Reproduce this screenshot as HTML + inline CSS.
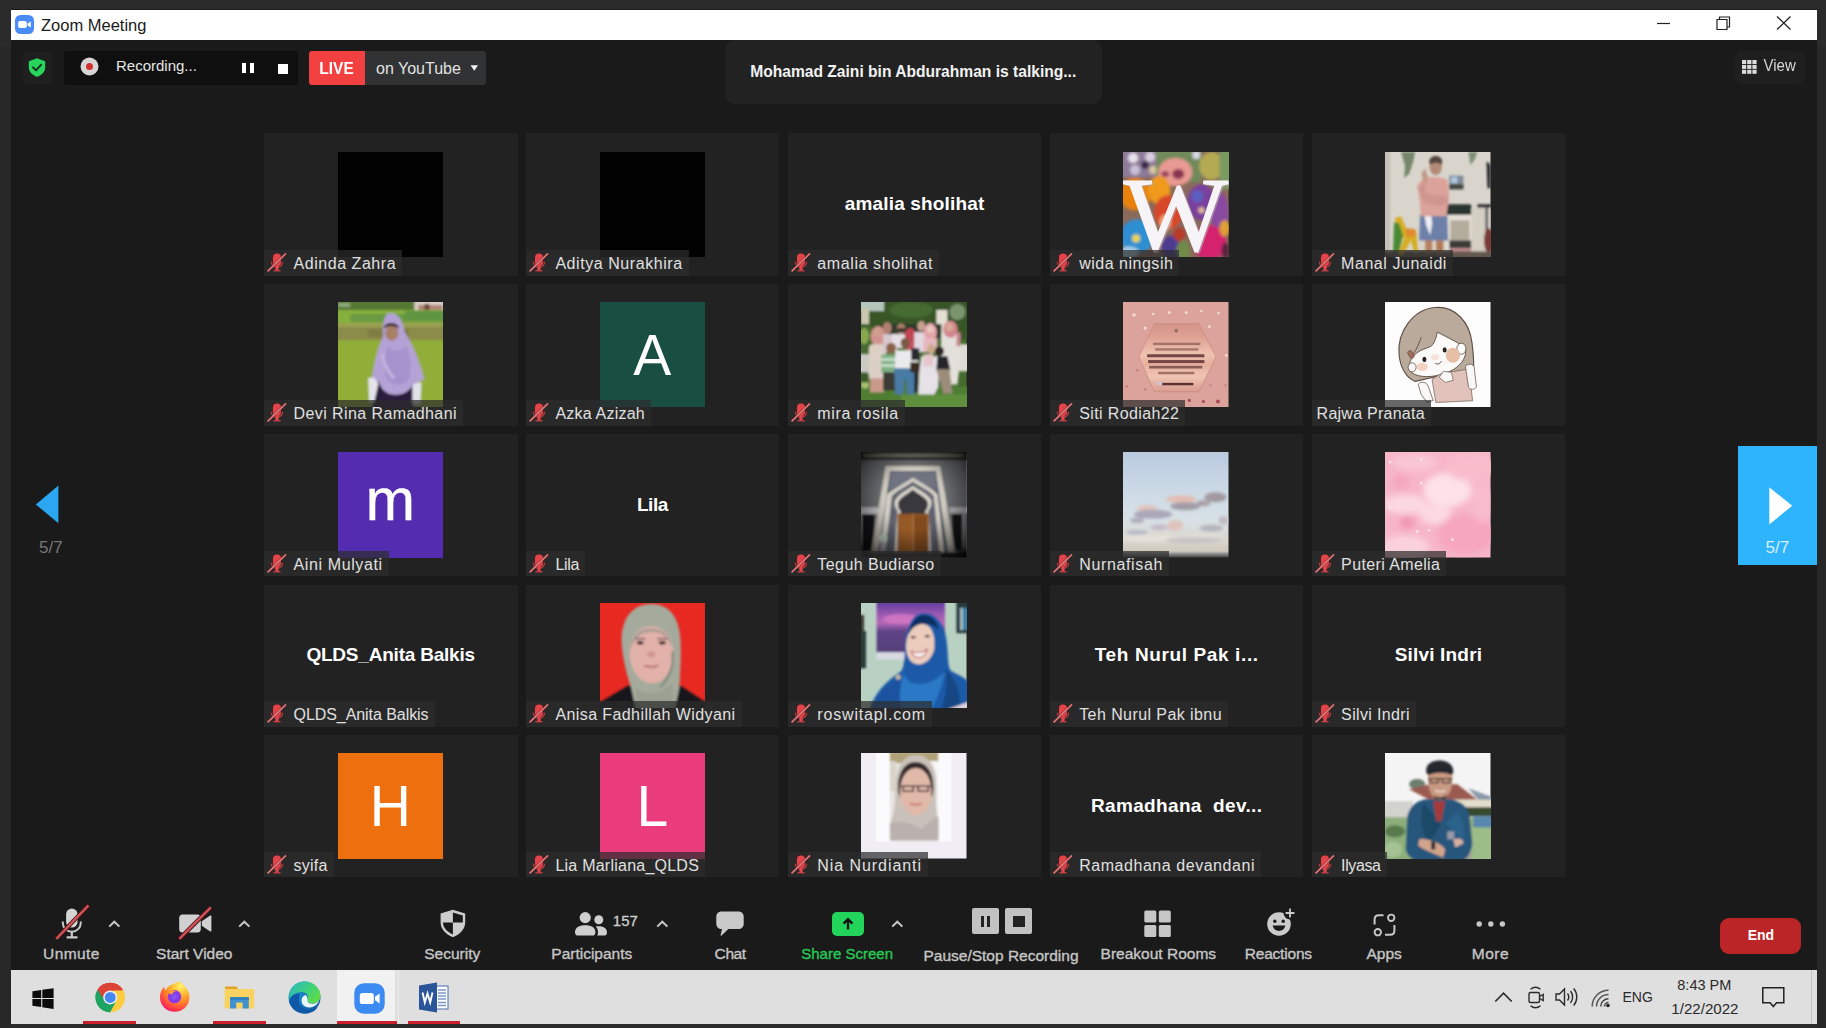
<!DOCTYPE html>
<html>
<head>
<meta charset="utf-8">
<title>Zoom Meeting</title>
<style>
*{box-sizing:border-box;margin:0;padding:0}
html,body{width:1826px;height:1028px;overflow:hidden;background:#2b2b2b;font-family:"Liberation Sans",sans-serif;}
.abs{position:absolute}
#win{position:absolute;left:11px;top:10px;width:1806px;height:1013.800px;background:#1a1a1a;overflow:hidden}
#titlebar{position:absolute;left:0;top:0;width:1806px;height:30px;background:#fff}
#titlebar .t{position:absolute;left:30px;top:4.5px;font-size:16.5px;line-height:20px;color:#1c1c1c;white-space:nowrap}
.tile{position:absolute;width:253.5px;height:142.4px;background:#222222}
.av{position:absolute;left:73.700px;top:18.300px;width:105.5px;height:105.5px;overflow:hidden}
.av svg{display:block}
.lbl{position:absolute;left:0;bottom:0;height:25.6px;background:rgba(45,45,45,0.72);color:#e0e0e0;font-size:16px;line-height:27px;padding-left:29.5px;padding-right:6px;white-space:nowrap}
.lbl.nomic{padding-left:5px}
.lbl svg{position:absolute;left:3px;top:3px}
.big{position:absolute;left:0;top:0;width:100%;height:100%;display:flex;align-items:center;justify-content:center;color:#fff;font-weight:bold;font-size:19px;white-space:nowrap;padding-bottom:1px}
.ltr{position:absolute;left:0;top:0;width:100%;height:100%;display:flex;align-items:center;justify-content:center;color:#fff;font-size:57px}
.ltrm{padding-bottom:9.500px;font-size:59px !important;-webkit-text-stroke:0.500px #fff}
.tbl{position:absolute;color:#c6c6c6;font-size:15.5px;white-space:nowrap;line-height:18px;margin-top:0.600px;-webkit-text-stroke:0.35px #c6c6c6;transform:translateX(-50%)}
#taskbar{position:absolute;left:0;top:960.400px;width:1806px;height:53.400px;background:#dfdfdf}
.ul{position:absolute;top:50.300px;height:3.100px;background:#cc1f2d}
.tray{position:absolute;color:#2a2a2a;font-size:14.5px;white-space:nowrap;line-height:16px}
</style>
</head>
<body>
<div class="abs" style="left:1817px;top:47px;width:9px;height:981px;background:#272727"></div>
<div class="abs" style="left:0;top:47px;width:11px;height:981px;background:#282828"></div>
<div class="abs" style="left:11px;top:9px;width:1806px;height:1px;background:#1b1b1b"></div>
<div id="win">
  <div id="titlebar">
    <svg class="abs" style="left:4px;top:5px" width="19" height="19" viewBox="0 0 19 19"><rect x="0" y="0" width="19" height="19" rx="5.5" fill="#4a8cf7"/><rect x="3.2" y="6" width="8.6" height="7" rx="1.8" fill="#fff"/><path d="M12.6 8.6 L15.8 6.4 V12.6 L12.6 10.4Z" fill="#fff"/></svg>
    <div class="t">Zoom Meeting</div>
    <svg class="abs" style="left:1640px;top:0" width="150" height="30" viewBox="0 0 150 30"><path d="M6 13.5H19" stroke="#222" stroke-width="1.2" fill="none"/><path d="M66 9.5H76V19.5H66Z M68.5 9.5V7H78.5V17H76" stroke="#222" stroke-width="1.2" fill="none"/><path d="M126 6.5L139.5 19.5M139.5 6.5L126 19.5" stroke="#222" stroke-width="1.3" fill="none"/></svg>
  </div>
  <!-- top bar -->
  <div class="abs" style="left:12px;top:42px;width:29px;height:32px;background:#1f1f1f;border-radius:4px"></div>
  <svg class="abs" style="left:17px;top:47.5px" width="18" height="19" viewBox="0 0 18 19"><path d="M9 0.3 L17.2 3.2 V9.2 C17.2 13.8 13.6 17.2 9 18.8 C4.4 17.2 0.8 13.8 0.8 9.2 V3.2 Z" fill="#27d45c"/><path d="M5 9.4 L8 12.3 L13 6.8" stroke="#17301f" stroke-width="2" fill="none" stroke-linecap="round" stroke-linejoin="round"/></svg>
  <div class="abs" style="left:53px;top:41px;width:233.5px;height:33.5px;background:#0f0f0f;border-radius:3px"></div>
  <svg class="abs" style="left:69px;top:47px" width="19" height="19" viewBox="0 0 19 19"><circle cx="9.5" cy="9.5" r="9" fill="#d6d6d6"/><circle cx="9.5" cy="9.400" r="3.500" fill="#d62f2f"/></svg>
  <div class="abs" style="left:105px;top:47px;font-size:15px;line-height:18px;color:#e6e6e6;white-space:nowrap">Recording...</div>
  <div class="abs" style="left:230.5px;top:53px;width:4px;height:10px;background:#fff"></div>
  <div class="abs" style="left:238.5px;top:53px;width:4px;height:10px;background:#fff"></div>
  <div class="abs" style="left:266.5px;top:53.5px;width:10.5px;height:10px;background:#fff"></div>
  <div class="abs" style="left:297.5px;top:41px;width:56px;height:33.5px;background:#f23f3f;border-radius:3px 0 0 3px"></div>
  <div class="abs" style="left:297.5px;top:41px;width:56px;height:33.5px;line-height:34px;text-align:center;color:#fff;font-weight:bold;font-size:15.5px;transform:scaleY(1.100)">LIVE</div>
  <div class="abs" style="left:353.5px;top:41px;width:121.5px;height:33.5px;background:#303234;border-radius:0 3px 3px 0"></div>
  <div class="abs" style="left:365px;top:41px;height:33.5px;line-height:35px;color:#e2e2e2;font-size:16px;white-space:nowrap">on YouTube</div>
  <svg class="abs" style="left:458.5px;top:55px" width="9" height="6" viewBox="0 0 9 6"><path d="M0.5 0.3H8.1L4.3 5.7Z" fill="#eee"/></svg>
  <div class="abs" style="left:714px;top:30px;width:376.5px;height:64px;background:#222222;border-radius:11px"></div>
  <div class="abs" style="left:714px;top:30px;width:376.5px;height:64px;line-height:64px;text-align:center;color:#f2f2f2;font-weight:bold;font-size:15.6px;white-space:nowrap" id="talk">Mohamad Zaini bin Abdurahman is talking...</div>
  <div class="abs" style="left:1724px;top:41px;width:70px;height:33px;background:#1f1f1f;border-radius:8px"></div>
  <svg class="abs" style="left:1731px;top:50px" width="15" height="14" viewBox="0 0 15 14"><g fill="#dcdcdc"><rect x="0" y="0" width="4.2" height="4" /><rect x="5.2" y="0" width="4.2" height="4"/><rect x="10.4" y="0" width="4.2" height="4"/><rect x="0" y="4.9" width="4.2" height="4"/><rect x="5.2" y="4.9" width="4.2" height="4"/><rect x="10.4" y="4.9" width="4.2" height="4"/><rect x="0" y="9.8" width="4.2" height="4"/><rect x="5.2" y="9.8" width="4.2" height="4"/><rect x="10.4" y="9.8" width="4.2" height="4"/></g></svg>
  <div class="abs" style="left:1752.5px;top:47px;font-size:15px;line-height:18px;color:#d4d4d4;white-space:nowrap;transform:scaleY(1.080)">View</div>
  <!-- grid -->
  <div class="tile" style="left:253.0px;top:123.3px"><div class="av"><svg width="105.5" height="105.5" viewBox="0 0 105 105" preserveAspectRatio="none"><rect width="105" height="105" fill="#020202"/></svg></div><div class="lbl"><svg width="20" height="19" viewBox="0 0 20 19"><rect x="5.200" y="-0.400" width="9.600" height="14" rx="4.800" fill="#5a1a1c" opacity="0.550"/><g fill="#e3444a"><rect x="6" y="0.400" width="8" height="12.600" rx="4"/><path d="M3.800 8.800h1.300c0 2.800 2.100 4.800 4.900 4.800s4.900-2 4.900-4.800h1.300c0 3.300-2.300 5.700-5.300 6.100V17h2.700v1.500H6.400V17h2.700v-2.100C6.100 14.500 3.800 12.100 3.800 8.800z" opacity="0.750"/><rect x="8.400" y="12" width="3.200" height="5.500"/></g><path d="M0.600 18.400L19 0.400" stroke="#5a1a1c" stroke-width="3" opacity="0.450"/><path d="M0.600 18.400L19 0.400" stroke="#e07a7c" stroke-width="1.600"/></svg><span style="letter-spacing:0.545px">Adinda Zahra</span></div></div>
  <div class="tile" style="left:514.9px;top:123.3px"><div class="av"><svg width="105.5" height="105.5" viewBox="0 0 105 105" preserveAspectRatio="none"><rect width="105" height="105" fill="#020202"/></svg></div><div class="lbl"><svg width="20" height="19" viewBox="0 0 20 19"><rect x="5.200" y="-0.400" width="9.600" height="14" rx="4.800" fill="#5a1a1c" opacity="0.550"/><g fill="#e3444a"><rect x="6" y="0.400" width="8" height="12.600" rx="4"/><path d="M3.800 8.800h1.300c0 2.800 2.100 4.800 4.900 4.800s4.900-2 4.900-4.800h1.300c0 3.300-2.300 5.700-5.300 6.100V17h2.700v1.500H6.400V17h2.700v-2.100C6.100 14.500 3.800 12.100 3.800 8.800z" opacity="0.750"/><rect x="8.400" y="12" width="3.200" height="5.500"/></g><path d="M0.600 18.400L19 0.400" stroke="#5a1a1c" stroke-width="3" opacity="0.450"/><path d="M0.600 18.400L19 0.400" stroke="#e07a7c" stroke-width="1.600"/></svg><span style="letter-spacing:0.560px">Aditya Nurakhira</span></div></div>
  <div class="tile" style="left:776.8px;top:123.3px"><div class="big"><span style="letter-spacing:0.157px;margin-right:-0.157px">amalia sholihat</span></div><div class="lbl"><svg width="20" height="19" viewBox="0 0 20 19"><rect x="5.200" y="-0.400" width="9.600" height="14" rx="4.800" fill="#5a1a1c" opacity="0.550"/><g fill="#e3444a"><rect x="6" y="0.400" width="8" height="12.600" rx="4"/><path d="M3.800 8.800h1.300c0 2.800 2.100 4.800 4.900 4.800s4.900-2 4.900-4.800h1.300c0 3.300-2.300 5.700-5.300 6.100V17h2.700v1.500H6.400V17h2.700v-2.100C6.100 14.500 3.800 12.100 3.800 8.800z" opacity="0.750"/><rect x="8.400" y="12" width="3.200" height="5.500"/></g><path d="M0.600 18.400L19 0.400" stroke="#5a1a1c" stroke-width="3" opacity="0.450"/><path d="M0.600 18.400L19 0.400" stroke="#e07a7c" stroke-width="1.600"/></svg><span style="letter-spacing:0.600px">amalia sholihat</span></div></div>
  <div class="tile" style="left:1038.7px;top:123.3px"><div class="av"><svg width="105.5" height="105.5" viewBox="0 0 105 105" preserveAspectRatio="none"><filter id="bw" x="-5%" y="-5%" width="110%" height="110%"><feGaussianBlur stdDeviation="1.600"/></filter><rect width="105" height="105" fill="#8a6a5a"/><g filter="url(#bw)"><rect x="-5" y="-5" width="45" height="30" fill="#8d7a98"/><circle cx="10" cy="6" r="5" fill="#e8e4ee"/><circle cx="27" cy="5" r="5" fill="#d8d0e0"/><circle cx="12" cy="18" r="5" fill="#c8c0d8"/><circle cx="22" cy="13" r="4" fill="#3a2a4a"/><circle cx="30" cy="18" r="4" fill="#d8c8a0"/><rect x="33" y="-5" width="45" height="35" fill="#6f8a5a"/><ellipse cx="52" cy="20" rx="17" ry="14" fill="#e89a92"/><ellipse cx="55" cy="22" rx="6" ry="5" fill="#8a3050"/><ellipse cx="42" cy="22" rx="4" ry="3" fill="#9a4060"/><ellipse cx="88" cy="14" rx="12" ry="14" fill="#b4aa52"/><rect x="96" y="-3" width="12" height="40" fill="#7a9a62"/><circle cx="73" cy="3" r="4" fill="#d8d8e8"/><ellipse cx="12" cy="42" rx="16" ry="16" fill="#e8820f"/><ellipse cx="36" cy="38" rx="11" ry="14" fill="#f09a1a"/><ellipse cx="45" cy="60" rx="14" ry="17" fill="#d8462a"/><ellipse cx="42" cy="70" rx="6" ry="8" fill="#f0a070"/><ellipse cx="78" cy="50" rx="14" ry="18" fill="#7a3f9e"/><ellipse cx="74" cy="44" rx="6" ry="6" fill="#5a60c0"/><ellipse cx="96" cy="60" rx="9" ry="20" fill="#8a4aa0"/><circle cx="78" cy="58" r="3" fill="#e8c090"/><ellipse cx="14" cy="84" rx="17" ry="17" fill="#2f8ed2"/><circle cx="13" cy="86" r="4" fill="#e8d84a"/><ellipse cx="6" cy="100" rx="10" ry="6" fill="#a8d0e8"/><ellipse cx="48" cy="95" rx="10" ry="12" fill="#4e3a92"/><ellipse cx="60" cy="98" rx="7" ry="10" fill="#6f8a4a"/><ellipse cx="56" cy="82" rx="6" ry="7" fill="#b83a2a"/><ellipse cx="86" cy="90" rx="17" ry="17" fill="#d4246e"/><ellipse cx="101" cy="76" rx="5" ry="8" fill="#e0a030"/><ellipse cx="102" cy="98" rx="4" ry="8" fill="#5a2040"/></g><g transform="translate(52.500 0) scale(1.050 1) translate(-52.500 0)"><text x="52.500" y="97.500" text-anchor="middle" font-family="Liberation Serif,serif" font-size="105" fill="#b8a8b0" stroke="#b8a8b0" stroke-width="1.200" opacity="0.600" transform="translate(1.500,1.500)">W</text><text x="52.500" y="97.500" text-anchor="middle" font-family="Liberation Serif,serif" font-size="105" fill="#f6f4f6" stroke="#f6f4f6" stroke-width="1.200">W</text></g></svg></div><div class="lbl"><svg width="20" height="19" viewBox="0 0 20 19"><rect x="5.200" y="-0.400" width="9.600" height="14" rx="4.800" fill="#5a1a1c" opacity="0.550"/><g fill="#e3444a"><rect x="6" y="0.400" width="8" height="12.600" rx="4"/><path d="M3.800 8.800h1.300c0 2.800 2.100 4.800 4.900 4.800s4.900-2 4.900-4.800h1.300c0 3.300-2.300 5.700-5.300 6.100V17h2.700v1.500H6.400V17h2.700v-2.100C6.100 14.500 3.800 12.100 3.800 8.800z" opacity="0.750"/><rect x="8.400" y="12" width="3.200" height="5.500"/></g><path d="M0.600 18.400L19 0.400" stroke="#5a1a1c" stroke-width="3" opacity="0.450"/><path d="M0.600 18.400L19 0.400" stroke="#e07a7c" stroke-width="1.600"/></svg><span style="letter-spacing:0.509px">wida ningsih</span></div></div>
  <div class="tile" style="left:1300.6px;top:123.3px"><div class="av"><svg width="105.5" height="105.5" viewBox="0 0 105 105" preserveAspectRatio="none"><filter id="bm" x="-5%" y="-5%" width="110%" height="110%"><feGaussianBlur stdDeviation="0.900"/></filter><rect width="105" height="105" fill="#d9d5cd"/><g filter="url(#bm)"><rect x="-3" y="-3" width="8" height="111" fill="#c4c0b8"/><path d="M16 0h14l-2 10l-4 12l-5 4l1-12z" fill="#76866a"/><path d="M83 0h9l-3 8l-4 5z" fill="#7f8f74"/><rect x="64" y="23.500" width="14" height="14" fill="#7f8c98"/><rect x="64" y="32" width="14" height="5" fill="#4a4a40"/><rect x="66" y="25" width="6" height="6" fill="#b0c8e0"/><rect x="61" y="52" width="25" height="11" rx="2" fill="#2c3631"/><rect x="61" y="62.500" width="27" height="44" fill="#e4e0d8"/><rect x="65" y="68" width="19" height="20" fill="#b4ac9c"/><rect x="64" y="88" width="22" height="8" fill="#3c3a38"/><rect x="64" y="96" width="22" height="6" fill="#c08888"/><rect x="86" y="56" width="19" height="44" fill="#d4cfc2"/><rect x="92" y="52" width="14" height="3.500" fill="#33333a"/><rect x="100" y="55" width="2.500" height="30" fill="#55555a"/><path d="M101 10c3 0 4 3 4 6v20h-3z" fill="#26262a"/><ellipse cx="103" cy="88" rx="4.500" ry="12" fill="#7a3a34"/><rect x="-3" y="99" width="111" height="9" fill="#62584e"/><path d="M10 66l6-2l5 12l10 2l2 22h-4l-3-12l-8 14h-5l6-16l-7-4z" fill="#d6ae22"/><path d="M9 70l5 1l4 12l-4 16h-6z" fill="#4c8a34"/><path d="M20 76l10 1l1 6l-9 2z" fill="#e08a30"/><rect x="40" y="86" width="7" height="15" fill="#b98060"/><rect x="51" y="86" width="7" height="15" fill="#b47a58"/><path d="M35 62h27l1 26h-29z" fill="#6c80a8"/><path d="M39 62h7l1 9l-2 12l-4-10z" fill="#eeeef2"/><path d="M36 28c4-4 22-4 26 0l2 16l-3 20h-25l-2-20l-2-10z" fill="#dba29b"/><path d="M33 36l6-8l3 14l18 2l4 6l-10 4l-16-4z" fill="#cf9690"/><path d="M36 22l4-6l3 10l-3 6z" fill="#c39a86"/><ellipse cx="50.500" cy="15" rx="6.200" ry="8" fill="#b28a76"/><path d="M44 10c0-8 13-8 13 0l-1 3c-3-3-8-3-11 0z" fill="#54443c"/></g></svg></div><div class="lbl"><svg width="20" height="19" viewBox="0 0 20 19"><rect x="5.200" y="-0.400" width="9.600" height="14" rx="4.800" fill="#5a1a1c" opacity="0.550"/><g fill="#e3444a"><rect x="6" y="0.400" width="8" height="12.600" rx="4"/><path d="M3.800 8.800h1.300c0 2.800 2.100 4.800 4.900 4.800s4.900-2 4.900-4.800h1.300c0 3.300-2.300 5.700-5.300 6.100V17h2.700v1.500H6.400V17h2.700v-2.100C6.100 14.500 3.800 12.100 3.800 8.800z" opacity="0.750"/><rect x="8.400" y="12" width="3.200" height="5.500"/></g><path d="M0.600 18.400L19 0.400" stroke="#5a1a1c" stroke-width="3" opacity="0.450"/><path d="M0.600 18.400L19 0.400" stroke="#e07a7c" stroke-width="1.600"/></svg><span style="letter-spacing:0.550px">Manal Junaidi</span></div></div>
  <div class="tile" style="left:253.0px;top:273.7px"><div class="av"><svg width="105.5" height="105.5" viewBox="0 0 105 105" preserveAspectRatio="none"><filter id="bd" x="-5%" y="-5%" width="110%" height="110%"><feGaussianBlur stdDeviation="0.900"/></filter><rect width="105" height="105" fill="#90ae38"/><g filter="url(#bd)"><rect x="-3" y="-3" width="111" height="12" fill="#567836"/><rect x="0" y="1" width="12" height="4" fill="#88a878"/><rect x="76" y="-2" width="32" height="11" fill="#d9ccc6"/><rect x="80" y="3" width="24" height="6" fill="#b08674"/><rect x="86" y="2" width="5" height="6" fill="#6a4a3c"/><rect x="-3" y="8" width="111" height="14" fill="#86b03c"/><rect x="12" y="12" width="96" height="8" rx="3" fill="#6a9a42"/><rect x="66" y="9" width="42" height="9" rx="3" fill="#5f9440"/><rect x="-3" y="21" width="111" height="18" fill="#8b8c48"/><rect x="-3" y="21" width="111" height="4" fill="#9aa052"/><rect x="30" y="27" width="40" height="8" fill="#807c44"/><rect x="-3" y="38" width="111" height="70" fill="#90ae38"/><path d="M36 78h38l2 30h-42z" fill="#2a1c3c"/><path d="M30 76l8-2l2 8l-4 18h-5z" fill="#e4e4ea"/><path d="M74 80h9l-1 22h-8z" fill="#e2e2ea"/><path d="M52 11c8 0 13 8 14 18c6 10 14 24 20 48c-6 3-10 4-12 6c-4 8-14 10-20 9c-8-1-12-8-13-12c-3-2-5-4-7-6c2-14 6-30 11-40c-1-12 1-23 7-23z" fill="#b4a2d6"/><path d="M50 44c4 6 12 6 18 0c4 10 6 20 2 34c-6 6-16 6-22-2c-2-12-2-22 2-32z" fill="#a692cc"/><path d="M44 52c2 8 4 16 12 24" stroke="#c4b4e0" stroke-width="3" fill="none"/><ellipse cx="53.500" cy="31" rx="6.500" ry="7.500" fill="#a88068"/><path d="M46 27c2-4 12-4 14 0l0 -3c-3-4-11-4-14 0z" fill="#3a2a2a"/></g></svg></div><div class="lbl"><svg width="20" height="19" viewBox="0 0 20 19"><rect x="5.200" y="-0.400" width="9.600" height="14" rx="4.800" fill="#5a1a1c" opacity="0.550"/><g fill="#e3444a"><rect x="6" y="0.400" width="8" height="12.600" rx="4"/><path d="M3.800 8.800h1.300c0 2.800 2.100 4.800 4.900 4.800s4.900-2 4.900-4.800h1.300c0 3.300-2.300 5.700-5.300 6.100V17h2.700v1.500H6.400V17h2.700v-2.100C6.100 14.500 3.800 12.100 3.800 8.800z" opacity="0.750"/><rect x="8.400" y="12" width="3.200" height="5.500"/></g><path d="M0.600 18.400L19 0.400" stroke="#5a1a1c" stroke-width="3" opacity="0.450"/><path d="M0.600 18.400L19 0.400" stroke="#e07a7c" stroke-width="1.600"/></svg><span style="letter-spacing:0.411px">Devi Rina Ramadhani</span></div></div>
  <div class="tile" style="left:514.9px;top:273.7px"><div class="av" style="background:#184f42"><div class="ltr ltrA">A</div></div><div class="lbl"><svg width="20" height="19" viewBox="0 0 20 19"><rect x="5.200" y="-0.400" width="9.600" height="14" rx="4.800" fill="#5a1a1c" opacity="0.550"/><g fill="#e3444a"><rect x="6" y="0.400" width="8" height="12.600" rx="4"/><path d="M3.800 8.800h1.300c0 2.800 2.100 4.800 4.900 4.800s4.900-2 4.900-4.800h1.300c0 3.300-2.300 5.700-5.300 6.100V17h2.700v1.500H6.400V17h2.700v-2.100C6.100 14.500 3.800 12.100 3.800 8.800z" opacity="0.750"/><rect x="8.400" y="12" width="3.200" height="5.500"/></g><path d="M0.600 18.400L19 0.400" stroke="#5a1a1c" stroke-width="3" opacity="0.450"/><path d="M0.600 18.400L19 0.400" stroke="#e07a7c" stroke-width="1.600"/></svg><span style="letter-spacing:0.220px">Azka Azizah</span></div></div>
  <div class="tile" style="left:776.8px;top:273.7px"><div class="av"><svg width="105.5" height="105.5" viewBox="0 0 105 105" preserveAspectRatio="none"><filter id="br" x="-5%" y="-5%" width="110%" height="110%"><feGaussianBlur stdDeviation="1.100"/></filter><rect width="105" height="105" fill="#456a2e"/><g filter="url(#br)"><rect x="-3" y="-3" width="111" height="40" fill="#375428"/><rect x="-3" y="-3" width="26" height="12" fill="#b4c6bc"/><ellipse cx="50" cy="8" rx="22" ry="8" fill="#456a30"/><ellipse cx="96" cy="10" rx="8" ry="8" fill="#7a9470"/><rect x="0" y="6" width="8" height="16" fill="#c9c8ae"/><rect x="75" y="8" width="11" height="26" fill="#e4e0d4"/><rect x="-3" y="24" width="14" height="30" fill="#4a6a30"/><ellipse cx="3" cy="34" rx="5" ry="8" fill="#88a850"/><rect x="-3" y="52" width="12" height="20" fill="#cbcbc2"/><rect x="94" y="42" width="14" height="27" fill="#dcdcd4"/><rect x="-3" y="84" width="111" height="24" fill="#4f7e32"/><rect x="40" y="92" width="68" height="16" fill="#5f8f3e"/><ellipse cx="4" cy="82" rx="4" ry="4" fill="#a8c070"/><rect x="-3" y="70" width="10" height="10" fill="#3a5a2a"/><rect x="20" y="22" width="60" height="14" fill="#2f3a2a"/><ellipse cx="17" cy="34" rx="7.500" ry="10" fill="#d39490"/><rect x="8" y="42" width="17" height="37" rx="4" fill="#dcd0c4"/><rect x="9" y="76" width="14" height="14" fill="#c99a8a"/><ellipse cx="16" cy="30" rx="4" ry="4.500" fill="#d0a08c"/><ellipse cx="26" cy="26" rx="4.500" ry="6" fill="#b08070"/><rect x="22" y="32" width="14" height="18" fill="#d8c8d0"/><ellipse cx="40" cy="27" rx="4.500" ry="5.500" fill="#a88068"/><rect x="31" y="32" width="16" height="14" fill="#e4e0e6"/><rect x="36" y="26" width="9" height="4" fill="#3a3030"/><ellipse cx="49" cy="33" rx="5.500" ry="7" fill="#c24452"/><rect x="45" y="38" width="10" height="10" fill="#c65060"/><ellipse cx="60" cy="24" rx="4" ry="5" fill="#c8a090"/><rect x="53" y="30" width="13" height="20" fill="#e2d8e2"/><ellipse cx="69" cy="30" rx="6.500" ry="9" fill="#e4a4ac"/><rect x="62" y="36" width="14" height="14" fill="#e6b8be"/><ellipse cx="69" cy="27" rx="3.500" ry="3.500" fill="#e8c8bc"/><path d="M80 32h18l1 24l-3 26h-13l-4-30z" fill="#e3dfda"/><ellipse cx="89" cy="27" rx="7" ry="8.500" fill="#d2848c"/><ellipse cx="88" cy="25" rx="4" ry="4.500" fill="#d8a898"/><rect x="95" y="30" width="4" height="14" fill="#c88890"/><ellipse cx="30" cy="46" rx="5" ry="5.500" fill="#8a6448"/><rect x="20" y="52" width="15" height="19" rx="3" fill="#7fae84"/><rect x="20" y="56" width="15" height="2.500" fill="#cfe4d0"/><rect x="20" y="62" width="15" height="2.500" fill="#cfe4d0"/><rect x="22" y="70" width="14" height="18" fill="#3a3a34"/><ellipse cx="44" cy="41" rx="4.500" ry="5.500" fill="#7a5a44"/><path d="M34 48h22l2 20h-24z" fill="#ebebee"/><rect x="50" y="46" width="8" height="12" fill="#2a2a34"/><path d="M33 66h21l-1 26h-7l-2-18l-2 18h-8z" fill="#4a7ca4"/><rect x="49" y="60" width="10" height="10" fill="#3a2a24"/><rect x="53" y="68" width="4" height="22" fill="#26262c"/><ellipse cx="70" cy="47" rx="4" ry="5" fill="#c8a888"/><path d="M60 54h18l-1 30l-4 8h-16l1-22z" fill="#e6e2e8"/><rect x="62" y="52" width="10" height="12" fill="#e6c8cc"/><ellipse cx="78" cy="49" rx="4.500" ry="5" fill="#2f2620"/><path d="M76 54h10l3 14h-14z" fill="#26262a"/><path d="M75 67h13l3 24h-9z" fill="#9c8c7a"/></g></svg></div><div class="lbl"><svg width="20" height="19" viewBox="0 0 20 19"><rect x="5.200" y="-0.400" width="9.600" height="14" rx="4.800" fill="#5a1a1c" opacity="0.550"/><g fill="#e3444a"><rect x="6" y="0.400" width="8" height="12.600" rx="4"/><path d="M3.800 8.800h1.300c0 2.800 2.100 4.800 4.900 4.800s4.900-2 4.900-4.800h1.300c0 3.300-2.300 5.700-5.300 6.100V17h2.700v1.500H6.400V17h2.700v-2.100C6.100 14.500 3.800 12.100 3.800 8.800z" opacity="0.750"/><rect x="8.400" y="12" width="3.200" height="5.500"/></g><path d="M0.600 18.400L19 0.400" stroke="#5a1a1c" stroke-width="3" opacity="0.450"/><path d="M0.600 18.400L19 0.400" stroke="#e07a7c" stroke-width="1.600"/></svg><span style="letter-spacing:0.700px">mira rosila</span></div></div>
  <div class="tile" style="left:1038.7px;top:273.7px"><div class="av"><svg width="105.5" height="105.5" viewBox="0 0 105 105" preserveAspectRatio="none"><defs><linearGradient id="sg1" x1="0" y1="0" x2="0" y2="1"><stop offset="0" stop-color="#d4948a"/><stop offset="0.180" stop-color="#dda092"/><stop offset="0.450" stop-color="#efc2b0"/><stop offset="0.600" stop-color="#e7b09e"/><stop offset="0.780" stop-color="#f0c4b2"/><stop offset="1" stop-color="#d89c90"/></linearGradient><filter id="bs" x="-5%" y="-5%" width="110%" height="110%"><feGaussianBlur stdDeviation="0.700"/></filter></defs><rect width="105" height="105" fill="#dba39b"/><g filter="url(#bs)"><g fill="#f4d8d0"><circle cx="11" cy="13" r="1.800"/><circle cx="30" cy="12" r="1.300"/><circle cx="46" cy="10.500" r="1.500"/><circle cx="63" cy="10.500" r="1.600"/><circle cx="78" cy="9" r="1.300"/><circle cx="95" cy="11" r="1.300"/><circle cx="22" cy="26" r="1.600"/><circle cx="86" cy="24.500" r="1.500"/><circle cx="103" cy="53" r="1.500"/></g><g fill="#c98484"><circle cx="14" cy="68" r="1.300"/><circle cx="4" cy="84" r="1.300"/><circle cx="22" cy="87" r="1.300"/><circle cx="87" cy="83" r="1.200"/><circle cx="102" cy="83" r="1.200"/></g><g fill="#a8465a"><circle cx="66" cy="98" r="1.600"/><circle cx="80" cy="99" r="1.500"/><circle cx="94.500" cy="99" r="1.900"/></g><path d="M18 57L33 24L78 27L90 52L74 87L30 86Z" fill="none" stroke="#c48a80" stroke-width="0.800"/><path d="M15.800 54.600L31.200 21.400H75.500L92.600 54.600L75.500 89.400H31.200Z" fill="url(#sg1)" stroke="#c88a80" stroke-width="0.700"/><circle cx="53" cy="28.500" r="1.800" fill="#9a6a62"/><g fill="#6a4040"><rect x="30" y="40.500" width="47" height="2.400" opacity="0.550"/><rect x="32" y="46" width="43" height="2.400" opacity="0.550"/><rect x="24" y="52" width="57" height="3" fill="#5e3034" opacity="0.850"/><rect x="25" y="57.800" width="56" height="3" fill="#5e3034" opacity="0.850"/><rect x="26" y="63.500" width="53" height="2.700" opacity="0.750"/><rect x="35" y="69.500" width="36" height="2.400" opacity="0.600"/><rect x="39" y="80.500" width="31" height="2.400" fill="#4e2428" opacity="0.900"/></g><ellipse cx="36" cy="81" rx="3" ry="1.600" fill="#c8c8e0" opacity="0.800"/></g></svg></div><div class="lbl"><svg width="20" height="19" viewBox="0 0 20 19"><rect x="5.200" y="-0.400" width="9.600" height="14" rx="4.800" fill="#5a1a1c" opacity="0.550"/><g fill="#e3444a"><rect x="6" y="0.400" width="8" height="12.600" rx="4"/><path d="M3.800 8.800h1.300c0 2.800 2.100 4.800 4.900 4.800s4.900-2 4.900-4.800h1.300c0 3.300-2.300 5.700-5.300 6.100V17h2.700v1.500H6.400V17h2.700v-2.100C6.100 14.500 3.800 12.100 3.800 8.800z" opacity="0.750"/><rect x="8.400" y="12" width="3.200" height="5.500"/></g><path d="M0.600 18.400L19 0.400" stroke="#5a1a1c" stroke-width="3" opacity="0.450"/><path d="M0.600 18.400L19 0.400" stroke="#e07a7c" stroke-width="1.600"/></svg><span style="letter-spacing:0.383px">Siti Rodiah22</span></div></div>
  <div class="tile" style="left:1300.6px;top:273.7px"><div class="av"><svg width="105.5" height="105.5" viewBox="0 0 105 105" preserveAspectRatio="none"><rect width="105" height="105" fill="#fdfdfd"/><path d="M50 5.500C70 4 84 20 86.500 40C88 52 89 60 88 68C84 72 74 73 70 70L30 79C22 76 15 66 14 52C12 30 28 7 50 5.500Z" fill="#b9aa9b" stroke="#5c4c44" stroke-width="1.100"/><path d="M52 30C64 36 76 42 80 46C82 56 74 66 60 71C48 75 34 76 26 70C22 66 24 58 30 52C36 47 42 46 46 44C50 40 51 35 52 30Z" fill="#fbfaf8" stroke="#5c4c44" stroke-width="0.900"/><path d="M36 35C34 42 30 50 26 54" stroke="#5c4c44" stroke-width="0.900" fill="none"/><ellipse cx="76" cy="46.500" rx="4.500" ry="5.500" fill="#fbfaf8" stroke="#5c4c44" stroke-width="0.800"/><ellipse cx="27" cy="65" rx="4" ry="4.500" fill="#fbfaf8" stroke="#5c4c44" stroke-width="0.800"/><ellipse cx="67.600" cy="53" rx="7.200" ry="7.500" fill="#e6bfa6"/><ellipse cx="37" cy="64.500" rx="5.500" ry="4" fill="#f4d2c2"/><ellipse cx="50" cy="55" rx="4" ry="3" fill="#f6e2da"/><ellipse cx="39.200" cy="57.200" rx="2" ry="2.600" fill="#2a2220"/><ellipse cx="59.400" cy="47.700" rx="2" ry="2.600" fill="#2a2220"/><path d="M50 61C52 62.500 55 61.500 56 59" stroke="#4a3a34" stroke-width="0.900" fill="none"/><rect x="23.500" y="48" width="4.500" height="8" rx="2" transform="rotate(-30 26 52)" fill="#a46c5a" stroke="#5c4c44" stroke-width="0.600"/><path d="M46.800 77L58 70L68.300 69.200L83.500 66.600L87.200 98.300L50.600 100Z" fill="#e2c3bb" stroke="#6c5c54" stroke-width="0.700"/><path d="M54 75L58 69L66 70L68 78L60 80Z" fill="#faf8f6" stroke="#6c5c54" stroke-width="0.700"/><path d="M80 64C84 60 90 62 89 68L91 84C90 88 84 88 83 84Z" fill="#faf8f6" stroke="#6c5c54" stroke-width="0.800"/><path d="M33 82C36 78 42 80 43 84L48 98L42 100L36 92Z" fill="#faf8f6" stroke="#6c5c54" stroke-width="0.800"/></svg></div><div class="lbl nomic"><span style="letter-spacing:0.250px">Rajwa Pranata</span></div></div>
  <div class="tile" style="left:253.0px;top:424.1px"><div class="av" style="background:#542cb0"><div class="ltr ltrm">m</div></div><div class="lbl"><svg width="20" height="19" viewBox="0 0 20 19"><rect x="5.200" y="-0.400" width="9.600" height="14" rx="4.800" fill="#5a1a1c" opacity="0.550"/><g fill="#e3444a"><rect x="6" y="0.400" width="8" height="12.600" rx="4"/><path d="M3.800 8.800h1.300c0 2.800 2.100 4.800 4.900 4.800s4.900-2 4.900-4.800h1.300c0 3.300-2.300 5.700-5.300 6.100V17h2.700v1.500H6.400V17h2.700v-2.100C6.100 14.500 3.800 12.100 3.800 8.800z" opacity="0.750"/><rect x="8.400" y="12" width="3.200" height="5.500"/></g><path d="M0.600 18.400L19 0.400" stroke="#5a1a1c" stroke-width="3" opacity="0.450"/><path d="M0.600 18.400L19 0.400" stroke="#e07a7c" stroke-width="1.600"/></svg><span style="letter-spacing:0.618px">Aini Mulyati</span></div></div>
  <div class="tile" style="left:514.9px;top:424.1px"><div class="big"><span style="letter-spacing:-0.467px;margin-right:0.467px">Lila</span></div><div class="lbl"><svg width="20" height="19" viewBox="0 0 20 19"><rect x="5.200" y="-0.400" width="9.600" height="14" rx="4.800" fill="#5a1a1c" opacity="0.550"/><g fill="#e3444a"><rect x="6" y="0.400" width="8" height="12.600" rx="4"/><path d="M3.800 8.800h1.300c0 2.800 2.100 4.800 4.900 4.800s4.900-2 4.900-4.800h1.300c0 3.300-2.300 5.700-5.300 6.100V17h2.700v1.500H6.400V17h2.700v-2.100C6.100 14.500 3.800 12.100 3.800 8.800z" opacity="0.750"/><rect x="8.400" y="12" width="3.200" height="5.500"/></g><path d="M0.600 18.400L19 0.400" stroke="#5a1a1c" stroke-width="3" opacity="0.450"/><path d="M0.600 18.400L19 0.400" stroke="#e07a7c" stroke-width="1.600"/></svg><span style="letter-spacing:-0.267px">Lila</span></div></div>
  <div class="tile" style="left:776.8px;top:424.1px"><div class="av"><svg width="105.5" height="105.5" viewBox="0 0 105 105" preserveAspectRatio="none"><defs><filter id="bt" x="-5%" y="-5%" width="110%" height="110%"><feGaussianBlur stdDeviation="0.900"/></filter><radialGradient id="tv" cx="0.500" cy="0.450" r="0.720"><stop offset="0.400" stop-color="#000" stop-opacity="0"/><stop offset="0.750" stop-color="#000" stop-opacity="0.450"/><stop offset="1" stop-color="#000" stop-opacity="0.880"/></radialGradient></defs><rect width="105" height="105" fill="#6c6d70"/><g filter="url(#bt)"><rect x="-3" y="-3" width="111" height="12" fill="#2e2e2c"/><rect x="2" y="1.500" width="101" height="3.500" fill="#77776c"/><rect x="-3" y="8" width="111" height="50" fill="#707174"/><rect x="-3" y="55" width="20" height="7" fill="#c4c4c8"/><rect x="88" y="55" width="20" height="6" fill="#b4b4b8"/><rect x="1" y="62" width="12" height="36" fill="#18181a"/><rect x="91" y="62" width="10" height="36" fill="#141416"/><rect x="-3" y="62" width="4" height="40" fill="#9a9aa0"/><rect x="101" y="60" width="3" height="36" fill="#a0a0a4"/><path d="M24.400 13.900H78.800L95.200 108H8.600Z" fill="#cfcbc0"/><path d="M29 19H74.500L88 108H15.500Z" fill="#565b68"/><path d="M30 20H73.500L76 38L51.600 27L27.500 38Z" fill="#6f7380"/><path d="M51.600 25.300C58 30 72 36 76.300 42.400L84 108H17.500L25.700 42.400C32 36 46 30 51.600 25.300Z" fill="#d2cec4"/><path d="M51.600 29.500C57 33.500 69 38.500 72.300 43.800L79 108H23L30.800 43.800C35 38.500 46.500 33.500 51.600 29.500Z" fill="#5e626e"/><path d="M51.600 33.500C56 37 66 41 69.500 47C71.500 52 69 56 67 58.500L70.600 108H32.600L36.300 58.500C33.500 55 32.500 51 34.500 47C38 41 47.500 37 51.600 33.500Z" fill="#d6d2c8"/><path d="M51.600 37.200C55 40.500 63 44 66 49C67.500 53.500 65.500 57 63.800 59.500L67.400 108H36.400L39.700 59.500C37.500 57 36 53.500 37.500 49C40.500 44 48.500 40.500 51.600 37.200Z" fill="#38383c"/><rect x="36.400" y="61.300" width="31" height="41" fill="#8c5224"/><rect x="38" y="64" width="12" height="36" fill="#9a5e2a" opacity="0.700"/><rect x="53" y="64" width="12" height="36" fill="#7e461c" opacity="0.700"/><rect x="51.200" y="61.300" width="1" height="41" fill="#b88858"/><ellipse cx="22" cy="86" rx="4.500" ry="4.500" fill="#c8d8c8"/><rect x="19" y="90" width="5" height="12" fill="#a8a8b0"/><rect x="-3" y="100" width="111" height="8" fill="#2a2a2e"/></g><rect width="105" height="105" fill="url(#tv)"/></svg></div><div class="lbl"><svg width="20" height="19" viewBox="0 0 20 19"><rect x="5.200" y="-0.400" width="9.600" height="14" rx="4.800" fill="#5a1a1c" opacity="0.550"/><g fill="#e3444a"><rect x="6" y="0.400" width="8" height="12.600" rx="4"/><path d="M3.800 8.800h1.300c0 2.800 2.100 4.800 4.900 4.800s4.900-2 4.900-4.800h1.300c0 3.300-2.300 5.700-5.300 6.100V17h2.700v1.500H6.400V17h2.700v-2.100C6.100 14.500 3.800 12.100 3.800 8.800z" opacity="0.750"/><rect x="8.400" y="12" width="3.200" height="5.500"/></g><path d="M0.600 18.400L19 0.400" stroke="#5a1a1c" stroke-width="3" opacity="0.450"/><path d="M0.600 18.400L19 0.400" stroke="#e07a7c" stroke-width="1.600"/></svg><span style="letter-spacing:0.431px">Teguh Budiarso</span></div></div>
  <div class="tile" style="left:1038.7px;top:424.1px"><div class="av"><svg width="105.5" height="105.5" viewBox="0 0 105 105" preserveAspectRatio="none"><defs><linearGradient id="ng" x1="0" y1="0" x2="0" y2="1"><stop offset="0" stop-color="#b9cadf"/><stop offset="0.350" stop-color="#cbd9e6"/><stop offset="0.650" stop-color="#d8e1e6"/><stop offset="0.860" stop-color="#d8d4ca"/><stop offset="0.940" stop-color="#cfc9be"/><stop offset="0.975" stop-color="#77777a"/><stop offset="1" stop-color="#444446"/></linearGradient><filter id="bn" x="-10%" y="-10%" width="120%" height="120%"><feGaussianBlur stdDeviation="1.800"/></filter></defs><rect width="105" height="105" fill="url(#ng)"/><g filter="url(#bn)"><ellipse cx="58" cy="47" rx="15" ry="4" fill="#e2beb4"/><ellipse cx="62" cy="54" rx="15" ry="4" fill="#a09ca4"/><ellipse cx="92" cy="45" rx="11" ry="5" fill="#a29aa0"/><ellipse cx="80" cy="51" rx="7" ry="3" fill="#aaa2a6"/><ellipse cx="24" cy="56" rx="10" ry="3" fill="#e0c2b8"/><ellipse cx="30" cy="62" rx="19" ry="4.500" fill="#aaa8b8"/><ellipse cx="14" cy="68" rx="7" ry="3" fill="#b0aebc"/><ellipse cx="52" cy="73" rx="8" ry="5.500" fill="#dfc4bc"/><ellipse cx="36" cy="75" rx="9" ry="3" fill="#c2bec6"/><ellipse cx="88" cy="76" rx="12" ry="3.500" fill="#b6b6be"/><ellipse cx="100" cy="68" rx="5" ry="4" fill="#c0bcc0"/><ellipse cx="30" cy="86" rx="30" ry="4" fill="#e6e0d8"/><ellipse cx="14" cy="80" rx="11" ry="2.500" fill="#b8bcc6"/><ellipse cx="70" cy="88" rx="28" ry="3" fill="#c8c4c4"/><ellipse cx="80" cy="82" rx="20" ry="2.500" fill="#e0dcd8"/></g></svg></div><div class="lbl"><svg width="20" height="19" viewBox="0 0 20 19"><rect x="5.200" y="-0.400" width="9.600" height="14" rx="4.800" fill="#5a1a1c" opacity="0.550"/><g fill="#e3444a"><rect x="6" y="0.400" width="8" height="12.600" rx="4"/><path d="M3.800 8.800h1.300c0 2.800 2.100 4.800 4.900 4.800s4.900-2 4.900-4.800h1.300c0 3.300-2.300 5.700-5.300 6.100V17h2.700v1.500H6.400V17h2.700v-2.100C6.100 14.500 3.800 12.100 3.800 8.800z" opacity="0.750"/><rect x="8.400" y="12" width="3.200" height="5.500"/></g><path d="M0.600 18.400L19 0.400" stroke="#5a1a1c" stroke-width="3" opacity="0.450"/><path d="M0.600 18.400L19 0.400" stroke="#e07a7c" stroke-width="1.600"/></svg><span style="letter-spacing:0.644px">Nurnafisah</span></div></div>
  <div class="tile" style="left:1300.6px;top:424.1px"><div class="av"><svg width="105.5" height="105.5" viewBox="0 0 105 105" preserveAspectRatio="none"><defs><filter id="bp" x="-10%" y="-10%" width="120%" height="120%"><feGaussianBlur stdDeviation="3"/></filter></defs><rect width="105" height="105" fill="#f7b6c8"/><g filter="url(#bp)"><ellipse cx="62" cy="38" rx="24" ry="17" fill="#fde2e8"/><ellipse cx="85" cy="15" rx="25" ry="14" fill="#f9bccb"/><ellipse cx="20" cy="52" rx="22" ry="10" fill="#fcd8e0"/><ellipse cx="16" cy="30" rx="9" ry="8" fill="#f5a6c0"/><ellipse cx="30" cy="10" rx="22" ry="9" fill="#f9c6d4"/><ellipse cx="50" cy="62" rx="16" ry="10" fill="#fcdae2"/><ellipse cx="22" cy="70" rx="7" ry="7" fill="#f296b2"/><ellipse cx="80" cy="82" rx="28" ry="20" fill="#f6a6bd"/><ellipse cx="20" cy="95" rx="24" ry="12" fill="#fad2dc"/><ellipse cx="96" cy="50" rx="10" ry="20" fill="#f8bccc"/></g><g fill="#fdeaf0" opacity="0.800"><circle cx="36" cy="7" r="1.300"/><circle cx="36" cy="31" r="1.400"/><circle cx="5" cy="10" r="1.500"/><circle cx="32" cy="79" r="1.700"/><circle cx="67" cy="87" r="1.500"/><circle cx="44" cy="78" r="1.300"/><circle cx="5" cy="55" r="1.300"/></g></svg></div><div class="lbl"><svg width="20" height="19" viewBox="0 0 20 19"><rect x="5.200" y="-0.400" width="9.600" height="14" rx="4.800" fill="#5a1a1c" opacity="0.550"/><g fill="#e3444a"><rect x="6" y="0.400" width="8" height="12.600" rx="4"/><path d="M3.800 8.800h1.300c0 2.800 2.100 4.800 4.900 4.800s4.900-2 4.900-4.800h1.300c0 3.300-2.300 5.700-5.300 6.100V17h2.700v1.500H6.400V17h2.700v-2.100C6.100 14.500 3.800 12.100 3.800 8.800z" opacity="0.750"/><rect x="8.400" y="12" width="3.200" height="5.500"/></g><path d="M0.600 18.400L19 0.400" stroke="#5a1a1c" stroke-width="3" opacity="0.450"/><path d="M0.600 18.400L19 0.400" stroke="#e07a7c" stroke-width="1.600"/></svg><span style="letter-spacing:0.383px">Puteri Amelia</span></div></div>
  <div class="tile" style="left:253.0px;top:574.5px"><div class="big"><span style="letter-spacing:-0.212px;margin-right:0.212px">QLDS_Anita Balkis</span></div><div class="lbl"><svg width="20" height="19" viewBox="0 0 20 19"><rect x="5.200" y="-0.400" width="9.600" height="14" rx="4.800" fill="#5a1a1c" opacity="0.550"/><g fill="#e3444a"><rect x="6" y="0.400" width="8" height="12.600" rx="4"/><path d="M3.800 8.800h1.300c0 2.800 2.100 4.800 4.900 4.800s4.900-2 4.900-4.800h1.300c0 3.300-2.300 5.700-5.300 6.100V17h2.700v1.500H6.400V17h2.700v-2.100C6.100 14.500 3.800 12.100 3.800 8.800z" opacity="0.750"/><rect x="8.400" y="12" width="3.200" height="5.500"/></g><path d="M0.600 18.400L19 0.400" stroke="#5a1a1c" stroke-width="3" opacity="0.450"/><path d="M0.600 18.400L19 0.400" stroke="#e07a7c" stroke-width="1.600"/></svg><span style="letter-spacing:-0.062px">QLDS_Anita Balkis</span></div></div>
  <div class="tile" style="left:514.9px;top:574.5px"><div class="av"><svg width="105.5" height="105.5" viewBox="0 0 105 105" preserveAspectRatio="none"><defs><filter id="ba" x="-5%" y="-5%" width="110%" height="110%"><feGaussianBlur stdDeviation="0.800"/></filter></defs><rect width="105" height="105" fill="#e82922"/><g filter="url(#ba)"><path d="M-2 100L28 82H80L107 100V108H-2Z" fill="#19191b"/><path d="M51 1C70 1 79 16 80 36C81 50 80 66 79 84L74 108H36L31 84C26 70 22 52 21.500 38C21 16 32 1 51 1Z" fill="#a4aa9c"/><path d="M36 84C44 92 60 92 72 80L74 108H36Z" fill="#9aa092"/><path d="M51 23.500C64 23.500 73 34 73 50C73 66 64 80 52 80C39 80 29.500 66 29.500 50C29.500 34 38 23.500 51 23.500Z" fill="#e2b1a9"/><path d="M30.500 46C31 32 40 25.500 51 25.500C62 25.500 70.500 32 72 44C67 32 60 28.500 51 28.500C42 28.500 35 33 30.500 46Z" fill="#8f958a" opacity="0.700"/><ellipse cx="40" cy="39.500" rx="3.500" ry="1.800" fill="#3a2a2a"/><ellipse cx="62" cy="39.500" rx="3.500" ry="1.800" fill="#3a2a2a"/><path d="M35 35.500h10M57 35.500h10" stroke="#5a4040" stroke-width="1.200"/><ellipse cx="51" cy="51" rx="4" ry="3" fill="#d09890"/><path d="M44 62C48 64 54 64 58 62" stroke="#b86a6a" stroke-width="2" fill="none"/><path d="M72 48C74 60 70 74 60 84" stroke="#80867a" stroke-width="2" fill="none"/></g></svg></div><div class="lbl"><svg width="20" height="19" viewBox="0 0 20 19"><rect x="5.200" y="-0.400" width="9.600" height="14" rx="4.800" fill="#5a1a1c" opacity="0.550"/><g fill="#e3444a"><rect x="6" y="0.400" width="8" height="12.600" rx="4"/><path d="M3.800 8.800h1.300c0 2.800 2.100 4.800 4.900 4.800s4.900-2 4.900-4.800h1.300c0 3.300-2.300 5.700-5.300 6.100V17h2.700v1.500H6.400V17h2.700v-2.100C6.100 14.500 3.800 12.100 3.800 8.800z" opacity="0.750"/><rect x="8.400" y="12" width="3.200" height="5.500"/></g><path d="M0.600 18.400L19 0.400" stroke="#5a1a1c" stroke-width="3" opacity="0.450"/><path d="M0.600 18.400L19 0.400" stroke="#e07a7c" stroke-width="1.600"/></svg><span style="letter-spacing:0.409px">Anisa Fadhillah Widyani</span></div></div>
  <div class="tile" style="left:776.8px;top:574.5px"><div class="av"><svg width="105.5" height="105.5" viewBox="0 0 105 105" preserveAspectRatio="none"><defs><filter id="bo" x="-5%" y="-5%" width="110%" height="110%"><feGaussianBlur stdDeviation="0.900"/></filter><linearGradient id="og" x1="0" y1="0" x2="0" y2="1"><stop offset="0" stop-color="#5a3a9c"/><stop offset="0.250" stop-color="#9a58b0"/><stop offset="0.420" stop-color="#b868b8"/><stop offset="0.580" stop-color="#5e4488"/><stop offset="1" stop-color="#544078"/></linearGradient></defs><rect width="105" height="105" fill="#b9d1c2"/><g filter="url(#bo)"><rect x="-2" y="12" width="5" height="18" fill="#3a3a34"/><rect x="-2" y="28" width="7" height="37" fill="#2a3a38"/><rect x="15.500" y="-2" width="68" height="52" fill="url(#og)"/><ellipse cx="40" cy="16" rx="18" ry="5" fill="#d478c4" opacity="0.800"/><rect x="15.500" y="49" width="32" height="7" fill="#dadae2"/><rect x="95" y="-2" width="12" height="32" fill="#28383a"/><rect x="99" y="5" width="8" height="22" fill="#3c80a4"/><rect x="99" y="5" width="2" height="22" fill="#c8d8d8"/><path d="M62 10C76 10 84 22 85.500 40C87 54 86 64 90 68C98 72 106 76 108 80V108H8C12 92 24 78 40 68C44 62 43 50 44 40C46 22 52 10 62 10Z" fill="#1b5aa8"/><path d="M42 70C48 84 66 86 84 68C80 84 76 96 70 106H40C34 96 36 82 42 70Z" fill="#2a78c6"/><path d="M84 66C94 74 100 90 98 106H80C84 94 86 80 84 66Z" fill="#124684"/><path d="M20 88C30 80 38 76 42 72C38 84 38 96 40 106H10Z" fill="#1a52a0"/><path d="M62 12C70 12 76 18 78 28C74 22 68 20 60 22C54 23 50 28 47 34C48 22 54 12 62 12Z" fill="#0e2e62"/><path d="M60 21C70 20 74 32 73 44C72 54 64 62 56 61C48 60 44 50 45 40C46 30 52 22 60 21Z" fill="#ecccbc"/><path d="M50 48C54 50 62 50 66 46C65 52 60 55 56 54C53 53.500 51 51 50 48Z" fill="#fafafa" stroke="#c46878" stroke-width="1.200"/><ellipse cx="52" cy="34" rx="2.500" ry="1.200" fill="#3a2a2a"/><ellipse cx="66" cy="33" rx="2.500" ry="1.200" fill="#3a2a2a"/><ellipse cx="37" cy="74" rx="2.500" ry="2.500" fill="#c8b8a0"/><path d="M80 108L108 98V108Z" fill="#dcd4dc"/></g></svg></div><div class="lbl"><svg width="20" height="19" viewBox="0 0 20 19"><rect x="5.200" y="-0.400" width="9.600" height="14" rx="4.800" fill="#5a1a1c" opacity="0.550"/><g fill="#e3444a"><rect x="6" y="0.400" width="8" height="12.600" rx="4"/><path d="M3.800 8.800h1.300c0 2.800 2.100 4.800 4.900 4.800s4.900-2 4.900-4.800h1.300c0 3.300-2.300 5.700-5.300 6.100V17h2.700v1.500H6.400V17h2.700v-2.100C6.100 14.500 3.800 12.100 3.800 8.800z" opacity="0.750"/><rect x="8.400" y="12" width="3.200" height="5.500"/></g><path d="M0.600 18.400L19 0.400" stroke="#5a1a1c" stroke-width="3" opacity="0.450"/><path d="M0.600 18.400L19 0.400" stroke="#e07a7c" stroke-width="1.600"/></svg><span style="letter-spacing:0.833px">roswitapl.com</span></div></div>
  <div class="tile" style="left:1038.7px;top:574.5px"><div class="big"><span style="letter-spacing:0.624px;margin-right:-0.624px">Teh Nurul Pak i...</span></div><div class="lbl"><svg width="20" height="19" viewBox="0 0 20 19"><rect x="5.200" y="-0.400" width="9.600" height="14" rx="4.800" fill="#5a1a1c" opacity="0.550"/><g fill="#e3444a"><rect x="6" y="0.400" width="8" height="12.600" rx="4"/><path d="M3.800 8.800h1.300c0 2.800 2.100 4.800 4.900 4.800s4.900-2 4.900-4.800h1.300c0 3.300-2.300 5.700-5.300 6.100V17h2.700v1.500H6.400V17h2.700v-2.100C6.100 14.500 3.800 12.100 3.800 8.800z" opacity="0.750"/><rect x="8.400" y="12" width="3.200" height="5.500"/></g><path d="M0.600 18.400L19 0.400" stroke="#5a1a1c" stroke-width="3" opacity="0.450"/><path d="M0.600 18.400L19 0.400" stroke="#e07a7c" stroke-width="1.600"/></svg><span style="letter-spacing:0.424px">Teh Nurul Pak ibnu</span></div></div>
  <div class="tile" style="left:1300.6px;top:574.5px"><div class="big"><span style="letter-spacing:0.180px;margin-right:-0.180px">Silvi Indri</span></div><div class="lbl"><svg width="20" height="19" viewBox="0 0 20 19"><rect x="5.200" y="-0.400" width="9.600" height="14" rx="4.800" fill="#5a1a1c" opacity="0.550"/><g fill="#e3444a"><rect x="6" y="0.400" width="8" height="12.600" rx="4"/><path d="M3.800 8.800h1.300c0 2.800 2.100 4.800 4.900 4.800s4.900-2 4.900-4.800h1.300c0 3.300-2.300 5.700-5.300 6.100V17h2.700v1.500H6.400V17h2.700v-2.100C6.100 14.500 3.800 12.100 3.800 8.800z" opacity="0.750"/><rect x="8.400" y="12" width="3.200" height="5.500"/></g><path d="M0.600 18.400L19 0.400" stroke="#5a1a1c" stroke-width="3" opacity="0.450"/><path d="M0.600 18.400L19 0.400" stroke="#e07a7c" stroke-width="1.600"/></svg><span style="letter-spacing:0.360px">Silvi Indri</span></div></div>
  <div class="tile" style="left:253.0px;top:724.9px"><div class="av" style="background:#ee6f0e"><div class="ltr ltrH">H</div></div><div class="lbl"><svg width="20" height="19" viewBox="0 0 20 19"><rect x="5.200" y="-0.400" width="9.600" height="14" rx="4.800" fill="#5a1a1c" opacity="0.550"/><g fill="#e3444a"><rect x="6" y="0.400" width="8" height="12.600" rx="4"/><path d="M3.800 8.800h1.300c0 2.800 2.100 4.800 4.900 4.800s4.900-2 4.900-4.800h1.300c0 3.300-2.300 5.700-5.300 6.100V17h2.700v1.500H6.400V17h2.700v-2.100C6.100 14.500 3.800 12.100 3.800 8.800z" opacity="0.750"/><rect x="8.400" y="12" width="3.200" height="5.500"/></g><path d="M0.600 18.400L19 0.400" stroke="#5a1a1c" stroke-width="3" opacity="0.450"/><path d="M0.600 18.400L19 0.400" stroke="#e07a7c" stroke-width="1.600"/></svg><span style="letter-spacing:0.250px">syifa</span></div></div>
  <div class="tile" style="left:514.9px;top:724.9px"><div class="av" style="background:#ea3c7d"><div class="ltr ltrL">L</div></div><div class="lbl"><svg width="20" height="19" viewBox="0 0 20 19"><rect x="5.200" y="-0.400" width="9.600" height="14" rx="4.800" fill="#5a1a1c" opacity="0.550"/><g fill="#e3444a"><rect x="6" y="0.400" width="8" height="12.600" rx="4"/><path d="M3.800 8.800h1.300c0 2.800 2.100 4.800 4.900 4.800s4.900-2 4.900-4.800h1.300c0 3.300-2.300 5.700-5.300 6.100V17h2.700v1.500H6.400V17h2.700v-2.100C6.100 14.500 3.800 12.100 3.800 8.800z" opacity="0.750"/><rect x="8.400" y="12" width="3.200" height="5.500"/></g><path d="M0.600 18.400L19 0.400" stroke="#5a1a1c" stroke-width="3" opacity="0.450"/><path d="M0.600 18.400L19 0.400" stroke="#e07a7c" stroke-width="1.600"/></svg><span style="letter-spacing:0.238px">Lia Marliana_QLDS</span></div></div>
  <div class="tile" style="left:776.8px;top:724.9px"><div class="av"><svg width="105.5" height="105.5" viewBox="0 0 105 105" preserveAspectRatio="none"><defs><filter id="bi" x="-5%" y="-5%" width="110%" height="110%"><feGaussianBlur stdDeviation="0.900"/></filter></defs><rect width="105" height="105" fill="#f0eef4"/><rect x="15" y="0" width="75" height="88" fill="#fbfbfd"/><g filter="url(#bi)"><rect x="28.800" y="-1" width="48.100" height="88" fill="#e8e4e2"/><rect x="28.800" y="-1" width="48" height="11" fill="#b2a27a"/><rect x="66" y="8" width="11" height="60" fill="#f6f6f6"/><rect x="28.800" y="8" width="6" height="30" fill="#d8d4c8"/><path d="M54 2C68 2 75 14 75 30C75 44 74 56 77 66V87H28.800V70C34 60 34 46 34.500 32C35 14 42 2 54 2Z" fill="#c9c1b9"/><path d="M28.800 70C40 66 52 70 60 76C66 70 72 64 77 64V87H28.800Z" fill="#b9b1ad"/><path d="M54 9C66 9 72 20 72 34C72 38 71 42 70 44C68 28 64 20 54 20C45 20 40 28 39 44C37 40 36.500 36 37 32C37.500 20 43 9 54 9Z" fill="#362c2c"/><path d="M54.500 15C64 15 70 26 70 38C70 52 63 62 54.500 62C46 62 39 52 39 38C39 26 45 15 54.500 15Z" fill="#e1b9a9"/><path d="M40 33H70M42 33v5h10v-5M57 33v5h10v-5" stroke="#3a3234" stroke-width="1.500" fill="none"/><path d="M49 50C52 52 57 52 60 50" stroke="#cf7c7c" stroke-width="2.200" fill="none"/></g></svg></div><div class="lbl"><svg width="20" height="19" viewBox="0 0 20 19"><rect x="5.200" y="-0.400" width="9.600" height="14" rx="4.800" fill="#5a1a1c" opacity="0.550"/><g fill="#e3444a"><rect x="6" y="0.400" width="8" height="12.600" rx="4"/><path d="M3.800 8.800h1.300c0 2.800 2.100 4.800 4.900 4.800s4.900-2 4.900-4.800h1.300c0 3.300-2.300 5.700-5.300 6.100V17h2.700v1.500H6.400V17h2.700v-2.100C6.100 14.500 3.800 12.100 3.800 8.800z" opacity="0.750"/><rect x="8.400" y="12" width="3.200" height="5.500"/></g><path d="M0.600 18.400L19 0.400" stroke="#5a1a1c" stroke-width="3" opacity="0.450"/><path d="M0.600 18.400L19 0.400" stroke="#e07a7c" stroke-width="1.600"/></svg><span style="letter-spacing:0.933px">Nia Nurdianti</span></div></div>
  <div class="tile" style="left:1038.7px;top:724.9px"><div class="big"><span style="letter-spacing:0.350px;margin-right:-0.350px">Ramadhana &nbsp;dev...</span></div><div class="lbl"><svg width="20" height="19" viewBox="0 0 20 19"><rect x="5.200" y="-0.400" width="9.600" height="14" rx="4.800" fill="#5a1a1c" opacity="0.550"/><g fill="#e3444a"><rect x="6" y="0.400" width="8" height="12.600" rx="4"/><path d="M3.800 8.800h1.300c0 2.800 2.100 4.800 4.900 4.800s4.900-2 4.900-4.800h1.300c0 3.300-2.300 5.700-5.300 6.100V17h2.700v1.500H6.400V17h2.700v-2.100C6.100 14.500 3.800 12.100 3.800 8.800z" opacity="0.750"/><rect x="8.400" y="12" width="3.200" height="5.500"/></g><path d="M0.600 18.400L19 0.400" stroke="#5a1a1c" stroke-width="3" opacity="0.450"/><path d="M0.600 18.400L19 0.400" stroke="#e07a7c" stroke-width="1.600"/></svg><span style="letter-spacing:0.544px">Ramadhana devandani</span></div></div>
  <div class="tile" style="left:1300.6px;top:724.9px"><div class="av"><svg width="105.5" height="105.5" viewBox="0 0 105 105" preserveAspectRatio="none"><defs><filter id="by" x="-5%" y="-5%" width="110%" height="110%"><feGaussianBlur stdDeviation="1"/></filter></defs><rect width="105" height="105" fill="#f4f4f4"/><g filter="url(#by)"><rect x="-2" y="48" width="30" height="20" fill="#d2d2ce"/><ellipse cx="32" cy="31" rx="8" ry="5" fill="#6e7e6e"/><path d="M24 36L45 31H72L92 46.500H44Z" fill="#9b5a50"/><path d="M83 35L107 44V48H94Z" fill="#8a98a8"/><rect x="62" y="46.500" width="45" height="9" fill="#e2decb"/><rect x="78" y="54" width="30" height="9" fill="#38482f"/><rect x="-2" y="64" width="109" height="44" fill="#8eae7c"/><ellipse cx="10" cy="78" rx="10" ry="6" fill="#587a4e"/><ellipse cx="8" cy="96" rx="9" ry="8" fill="#a4c294"/><rect x="88" y="63" width="19" height="12" fill="#5888b0"/><rect x="86" y="74" width="21" height="34" fill="#9cbc88"/><rect x="80" y="86" width="6" height="22" fill="#a8a098"/><path d="M40 46C30 48 24 54 22 64L20.500 96C22 102 28 108 34 108H76C82 106 86 98 87 90L84 62C82 52 74 48 66 46Z" fill="#25567c"/><path d="M38 50C34 62 36 80 44 90L56 70Z" fill="#1f4868"/><path d="M60 70L72 58C78 66 80 78 78 88Z" fill="#2c628a"/><path d="M48 48H60L56 68H51Z" fill="#a43a3a"/><path d="M34 86C42 84 56 90 60 96L58 104C48 100 38 96 33 92Z" fill="#d2a48c"/><path d="M68 86C74 84 78 86 78 90L70 94Z" fill="#d8b0a0"/><rect x="62" y="78" width="7" height="8" fill="#9a9aa8"/><rect x="46" y="88" width="4" height="8" fill="#2a2a30"/><path d="M43 20C43 14 66 14 66.500 20C68 30 66 40 60 45C56 47 52 47 49 45C44 40 42 30 43 20Z" fill="#c99a82"/><path d="M41 18C40 4 68 4 68 18C68 20 67 22 66 22C60 19 50 19 44 22C42 22 41 20 41 18Z" fill="#28282e"/><path d="M43 25.500H67M45 25.500v4h8v-4M57 25.500v4h8v-4" stroke="#2a2a2e" stroke-width="1.200" fill="none"/><path d="M48 42C52 45 58 45 62 41L60 46H50Z" fill="#3a2c28"/><path d="M50 37C53 39 57 39 60 37" stroke="#f0e0d8" stroke-width="1.500" fill="none"/></g></svg></div><div class="lbl"><svg width="20" height="19" viewBox="0 0 20 19"><rect x="5.200" y="-0.400" width="9.600" height="14" rx="4.800" fill="#5a1a1c" opacity="0.550"/><g fill="#e3444a"><rect x="6" y="0.400" width="8" height="12.600" rx="4"/><path d="M3.800 8.800h1.300c0 2.800 2.100 4.800 4.900 4.800s4.900-2 4.900-4.800h1.300c0 3.300-2.300 5.700-5.300 6.100V17h2.700v1.500H6.400V17h2.700v-2.100C6.100 14.500 3.800 12.100 3.800 8.800z" opacity="0.750"/><rect x="8.400" y="12" width="3.200" height="5.500"/></g><path d="M0.600 18.400L19 0.400" stroke="#5a1a1c" stroke-width="3" opacity="0.450"/><path d="M0.600 18.400L19 0.400" stroke="#e07a7c" stroke-width="1.600"/></svg><span style="letter-spacing:-0.400px">Ilyasa</span></div></div>
  <!-- arrows -->
  <svg class="abs" style="left:24px;top:475px" width="26" height="40" viewBox="0 0 26 40"><path d="M0.800 19.400L23.400 0.500V38.300Z" fill="#2aa7f0"/></svg>
  <div class="abs" style="left:28px;top:528.5px;font-size:17px;line-height:18px;color:#767676;white-space:nowrap">5/7</div>
  <div class="abs" style="left:1727px;top:436px;width:79px;height:118.500px;background:#2db4fc"></div>
  <svg class="abs" style="left:1757px;top:476px" width="26" height="40" viewBox="0 0 26 40"><path d="M1.300 1.200L24.200 19.800L1.300 38.400Z" fill="#fff"/></svg>
  <div class="abs" style="left:1754.500px;top:528.5px;font-size:17px;line-height:18px;color:#d9eefb;white-space:nowrap">5/7</div>
  <!-- toolbar -->
  <svg class="abs" style="left:44px;top:893px" width="36" height="38" viewBox="0 0 36 38"><rect x="11.1" y="5.6" width="11.4" height="19" rx="5.7" fill="#d4d4d4"/><path d="M7.8 18.5v1.300a9 9 0 0 0 18 0v-1.300" stroke="#c9c9c9" stroke-width="2" fill="none"/><path d="M16.800 28.500V34M11.600 34.300H22.500" stroke="#c9c9c9" stroke-width="2.200" fill="none"/><path d="M1.300 35.900L33.500 2.400" stroke="#4a1416" stroke-width="4.200"/><path d="M1.300 35.900L33.500 2.400" stroke="#d2525a" stroke-width="2.300"/></svg>
  <svg class="abs" style="left:97px;top:910px" width="13" height="8" viewBox="0 0 13 8"><path d="M1.200 6.600L6.300 1.700L11.400 6.600" stroke="#c8c8c8" stroke-width="2" fill="none"/></svg>
  <div class="tbl" style="left:60.400px;top:934px;letter-spacing:0.400px">Unmute</div>

  <svg class="abs" style="left:166px;top:893px" width="38" height="38" viewBox="0 0 38 38"><rect x="2.200" y="11.400" width="21.600" height="18.200" rx="3.500" fill="#d0d0d0"/><path d="M24.800 18.300L33.200 12.600C33.800 12.200 34.400 12.600 34.400 13.300V27.700C34.400 28.400 33.800 28.800 33.200 28.400L24.800 22.700Z" fill="#d0d0d0"/><path d="M2.300 35.900L33.800 4.400" stroke="#4a1416" stroke-width="4.200"/><path d="M2.300 35.900L33.800 4.400" stroke="#d2525a" stroke-width="2.300"/></svg>
  <svg class="abs" style="left:227px;top:910px" width="13" height="8" viewBox="0 0 13 8"><path d="M1.200 6.600L6.300 1.700L11.400 6.600" stroke="#c8c8c8" stroke-width="2" fill="none"/></svg>
  <div class="tbl" style="left:183.250px;top:934px">Start Video</div>

  <svg class="abs" style="left:428px;top:899px" width="28" height="29" viewBox="0 0 28 29"><path d="M13.900 0.800L26.200 4.600V13.300C26.200 20.400 21 25.500 13.900 28.200C6.800 25.500 1.600 20.400 1.600 13.300V4.600Z" fill="#cdcdcd"/><path d="M13.900 3.400L23.800 6.400V13.600H13.900Z" fill="#1a1a1a"/><path d="M13.900 13.600V25.500C8.300 23.200 4.200 19.200 4 13.600Z" fill="#1a1a1a"/></svg>
  <div class="tbl" style="left:441.250px;top:934px">Security</div>

  <svg class="abs" style="left:563px;top:901px" width="34" height="26" viewBox="0 0 34 26"><g fill="#cfcfcf"><circle cx="11.200" cy="6.600" r="5.600"/><path d="M1 21.200C1 16.600 4.800 14.200 11.200 14.200S21.400 16.600 21.400 21.200C21.400 23.200 20.400 24.600 18.400 24.600H4C2 24.600 1 23.200 1 21.200Z"/><circle cx="24.800" cy="8.800" r="4.500"/><path d="M23.200 24.600C23.800 23.600 24 22.400 24 21.200C24 18.800 23.200 17 21.800 15.600C22.800 15.300 23.800 15.200 24.800 15.200C29.800 15.200 33 17.400 33 21.400C33 23.200 32 24.600 30.200 24.600Z"/></g></svg>
  <div class="abs" style="left:601.800px;top:902px;font-size:15px;line-height:18px;color:#cfcfcf;white-space:nowrap;-webkit-text-stroke:0.3px #cfcfcf">157</div>
  <svg class="abs" style="left:645px;top:910px" width="13" height="8" viewBox="0 0 13 8"><path d="M1.200 6.600L6.300 1.700L11.400 6.600" stroke="#c8c8c8" stroke-width="2" fill="none"/></svg>
  <div class="tbl" style="left:580.800px;top:934px">Participants</div>

  <svg class="abs" style="left:704px;top:900px" width="30" height="27" viewBox="0 0 30 27"><path d="M6.600 1.400H23.400C26.600 1.400 28.700 3.500 28.700 6.700V13.700C28.700 16.900 26.600 19 23.400 19H13.400L6.600 25.500C6 26 5.400 25.600 5.600 24.900L7 19H6.600C3.400 19 1.300 16.900 1.300 13.700V6.700C1.300 3.500 3.400 1.400 6.600 1.400Z" fill="#c9c9c9"/></svg>
  <div class="tbl" style="left:719.200px;top:934px;letter-spacing:-0.400px">Chat</div>

  <div class="abs" style="left:821px;top:902px;width:32.200px;height:23.500px;background:#23d45a;border-radius:5px"></div>
  <svg class="abs" style="left:829px;top:906px" width="16" height="16" viewBox="0 0 16 16"><path d="M8 13.500V3.500M3.600 7.600L8 3.200L12.400 7.600" stroke="#111" stroke-width="2.300" fill="none"/></svg>
  <svg class="abs" style="left:879.500px;top:910px" width="13" height="8" viewBox="0 0 13 8"><path d="M1.200 6.600L6.300 1.700L11.400 6.600" stroke="#c8c8c8" stroke-width="2" fill="none"/></svg>
  <div class="tbl" style="left:836.150px;top:934px;font-size:15px;color:#27c855;-webkit-text-stroke:0.35px #27c855">Share Screen</div>

  <div class="abs" style="left:961px;top:898px;width:26.500px;height:26px;background:#c2c2c2;border-radius:2px"></div>
  <div class="abs" style="left:969.500px;top:905.500px;width:3px;height:11px;background:#222"></div>
  <div class="abs" style="left:976px;top:905.500px;width:3px;height:11px;background:#222"></div>
  <div class="abs" style="left:994.400px;top:898px;width:26.500px;height:26px;background:#c2c2c2;border-radius:2px"></div>
  <div class="abs" style="left:1002px;top:905.500px;width:11.500px;height:11px;background:#222"></div>
  <div class="tbl" style="left:990px;top:936.500px">Pause/Stop Recording</div>

  <svg class="abs" style="left:1133px;top:900px" width="28" height="28" viewBox="0 0 28 28"><g fill="#c6c6c6"><rect x="0.300" y="0.400" width="12" height="12" rx="1.500"/><rect x="14.800" y="0.400" width="12" height="12" rx="1.500"/><rect x="0.300" y="14.900" width="12" height="12" rx="1.500"/><rect x="14.800" y="14.900" width="12" height="12" rx="1.500"/></g></svg>
  <div class="tbl" style="left:1147.350px;top:934px">Breakout Rooms</div>

  <svg class="abs" style="left:1254px;top:896px" width="32" height="32" viewBox="0 0 32 32"><circle cx="14" cy="18" r="11.800" fill="#cbcbcb"/><circle cx="9.800" cy="15.200" r="1.700" fill="#1a1a1a"/><circle cx="18.200" cy="15.200" r="1.700" fill="#1a1a1a"/><path d="M7.600 19.600C8.600 23.400 11 25 14 25S19.400 23.400 20.400 19.600Z" fill="#1a1a1a"/><circle cx="25" cy="7" r="6.500" fill="#1a1a1a"/><path d="M25 2.600V11.400M20.600 7H29.400" stroke="#cbcbcb" stroke-width="1.800"/></svg>
  <div class="tbl" style="left:1267.300px;top:934px;letter-spacing:-0.200px">Reactions</div>

  <svg class="abs" style="left:1361px;top:902px" width="26" height="26" viewBox="0 0 26 26"><path d="M2.600 12.500V7.500C2.600 4.800 4.400 3.200 7 3.200H11.500M22.400 13V18.500C22.400 21.200 20.600 22.800 18 22.800H13" stroke="#c8c8c8" stroke-width="2" fill="none"/><circle cx="19.200" cy="5.800" r="3.200" stroke="#c8c8c8" stroke-width="1.900" fill="none"/><circle cx="5.800" cy="20.200" r="3.200" stroke="#c8c8c8" stroke-width="1.900" fill="none"/></svg>
  <div class="tbl" style="left:1373.100px;top:934px">Apps</div>

  <svg class="abs" style="left:1464px;top:910px" width="32" height="8" viewBox="0 0 32 8"><g fill="#c8c8c8"><circle cx="4.200" cy="4" r="2.700"/><circle cx="15.800" cy="4" r="2.700"/><circle cx="27.400" cy="4" r="2.700"/></g></svg>
  <div class="tbl" style="left:1479.500px;top:934px;letter-spacing:0.500px">More</div>

  <div class="abs" style="left:1709.300px;top:908px;width:81.200px;height:36.200px;background:#bb2528;border-radius:9px"></div>
  <div class="abs" style="left:1709.300px;top:908px;width:81.200px;height:36.200px;line-height:35px;text-align:center;color:#fff;font-weight:bold;font-size:14px">End</div>
  <!-- taskbar -->
  <div id="taskbar">
    <svg class="abs" style="left:20.500px;top:17.500px" width="22" height="21" viewBox="0 0 22 21"><path d="M0.400 3.300L9.200 2V10H0.400ZM10.300 1.800L21.600 0.200V10H10.300ZM0.400 11.100H9.200V19.100L0.400 17.800ZM10.300 11.100H21.600V20.900L10.300 19.300Z" fill="#0c0c0c"/></svg>
    <div class="ul" style="left:72.400px;width:52.700px"></div>
    <div class="ul" style="left:202.300px;width:52.700px"></div>
    <div class="abs" style="left:326.400px;top:0;width:58px;height:53.500px;background:#f1f1f1"></div>
    <div class="abs" style="left:387.200px;top:0;width:1.200px;height:53.500px;background:#ededed"></div>
    <div class="ul" style="left:326.400px;width:60px"></div>
    <div class="ul" style="left:396.700px;width:52.700px"></div>
    <svg class="abs" style="left:84px;top:12px" width="31" height="31" viewBox="0 0 31 31"><circle cx="15.2" cy="15.400" r="14.800" fill="#fff"/><path d="M15.200 15.400L2.400 8A14.800 14.800 0 0 1 28 8Z" fill="#db4437"/><path d="M15.200 15.400L28 8A14.800 14.800 0 0 1 15.200 30.200Z" fill="#fbcd3f"/><path d="M15.200 15.400L15.200 30.200A14.800 14.800 0 0 1 2.400 8Z" fill="#1da462"/><path d="M15.200 8.600H28.200A14.800 14.800 0 0 0 2.400 8L8 16Z" fill="#db4437"/><path d="M21.800 17.500L15.200 30.200A14.800 14.800 0 0 0 28.200 8.600H18Z" fill="#fbcd3f"/><path d="M9 18.500L2.400 8A14.800 14.800 0 0 0 15.200 30.200L20.500 20.500Z" fill="#1da462"/><circle cx="15.200" cy="15.400" r="7" fill="#f1f1f1"/><circle cx="15.200" cy="15.400" r="5.500" fill="#4688f1"/></svg>
    <svg class="abs" style="left:148px;top:11px" width="32" height="32" viewBox="0 0 32 32"><defs><radialGradient id="ffg" cx="0.700" cy="0.150" r="0.950"><stop offset="0" stop-color="#fff36b"/><stop offset="0.300" stop-color="#ffbd2f"/><stop offset="0.600" stop-color="#ff7a2a"/><stop offset="0.850" stop-color="#ff3647"/><stop offset="1" stop-color="#e31587"/></radialGradient><radialGradient id="ffp" cx="0.500" cy="0.500" r="0.500"><stop offset="0" stop-color="#9059ff"/><stop offset="0.700" stop-color="#7a3be0"/><stop offset="1" stop-color="#b833e1"/></radialGradient></defs><path d="M15.800 2.500C18 1 20.500 1.200 21.500 0.800C22.500 3 25.500 4.500 27.800 8C30 11.500 31 15 30 19.500C28.800 25.500 23 30.800 15.800 30.800C7.500 30.800 1 24.500 1 16.500C1 12 2.500 8.500 5 5.800C5.200 7.500 5.800 8.500 6.500 9.200C8.500 5.500 12 3.500 15.800 2.500Z" fill="url(#ffg)"/><circle cx="15.500" cy="15.800" r="6.800" fill="url(#ffp)"/><path d="M9.500 10.500C12 8.800 15 9 17 10.500C14.500 10.500 13.200 12 13.500 13.500C11 13.500 9.500 12.500 9.500 10.500Z" fill="#ff9a2e"/></svg>
    <svg class="abs" style="left:213px;top:15px" width="31" height="25" viewBox="0 0 31 25"><path d="M1 1.500H12.500L14.500 4.500H1Z" fill="#e2a425"/><rect x="0.600" y="4" width="29.600" height="19.600" rx="1" fill="#f9d262"/><path d="M6 23.600V12.200H24.800V23.600H18.600V17.600H12.200V23.600Z" fill="#3f92cf"/><rect x="6" y="12.200" width="18.800" height="2.500" fill="#2f7fbd"/></svg>
    <svg class="abs" style="left:277px;top:11px" width="33" height="33" viewBox="0 0 33 33"><defs><linearGradient id="edg1" x1="0" y1="0" x2="1" y2="1"><stop offset="0" stop-color="#1fa3d8"/><stop offset="1" stop-color="#0d4f9e"/></linearGradient><linearGradient id="edg2" x1="0" y1="0" x2="1" y2="0.600"><stop offset="0" stop-color="#2bb8c9"/><stop offset="0.600" stop-color="#3fd07a"/><stop offset="1" stop-color="#5fdc4a"/></linearGradient></defs><circle cx="16.500" cy="16.500" r="16" fill="url(#edg1)"/><path d="M1.500 13C3 5 9.500 0.500 16.500 0.500C25.500 0.500 32.500 7 32.500 15C32.500 20 28.500 22.500 24.500 22.500C21 22.500 19 21 19 19.500C19 18.500 20 18 20 16C20 13.500 17.500 11 13.500 11C8 11 3 14 1.500 19Z" fill="url(#edg2)"/><path d="M11 20C11 24.500 15 29 21.500 29C25 29 28 27.500 30 25.500C27 31 21.500 32.500 16.500 32.500C9 32.500 3 27.500 1.200 21C1.500 16 6 12.500 11.500 12.500C11 14.500 11 17 11 20Z" fill="#0f58a8"/><path d="M19.500 19.700C19.500 21.500 21.500 22.700 24.600 22.700C27.500 22.700 29.800 21.500 31 19.500C29 25 24.500 26.500 21 26.500C17 26.500 13.500 23.500 13.500 19.500C13.500 16.500 15.500 14.500 17.500 14C19.500 15 19.500 17.500 19.500 19.700Z" fill="#e8f4fb"/></svg>
    <svg class="abs" style="left:342.500px;top:12.200px" width="31" height="31" viewBox="0 0 31 31"><rect x="0.300" y="0.300" width="30.400" height="30.400" rx="9.500" fill="#3c8bf3"/><rect x="5.800" y="10" width="14" height="11" rx="2.600" fill="#fff"/><path d="M21 13.800L25.600 10.600V20.400L21 17.200Z" fill="#fff"/></svg>
    <svg class="abs" style="left:407px;top:12px" width="31" height="31" viewBox="0 0 31 31"><rect x="17" y="4" width="13" height="23" fill="#fdfdfd" stroke="#4a6fb0" stroke-width="1"/><path d="M20 8H28M20 11H28M20 14H28M20 17H28M20 20.500H28M20 23.500H28" stroke="#7d98c6" stroke-width="1.300"/><path d="M1 3.600L19 0.500V30.500L1 27.400Z" fill="#2a5599"/><path d="M4.500 10.500L6.800 20.500L9.500 11.500L12.200 20.500L14.500 10.500" stroke="#fff" stroke-width="1.900" fill="none" stroke-linejoin="miter"/></svg>
    <svg class="abs" style="left:1483px;top:21px" width="19" height="12" viewBox="0 0 19 12"><path d="M1.300 10.500L9.500 2.200L17.700 10.500" stroke="#2b2b2b" stroke-width="1.700" fill="none"/></svg>
    <svg class="abs" style="left:1516px;top:16px" width="18" height="23" viewBox="0 0 18 23"><g stroke="#2b2b2b" stroke-width="1.400" fill="none"><path d="M3.500 3.200C6.500 0.800 10.500 0.800 13.500 3.200"/><path d="M3.500 19.800C6.500 22.200 10.500 22.200 13.500 19.800"/><rect x="2" y="6.500" width="10.500" height="10" rx="1.500"/><path d="M12.500 10.500L16.200 8.500V14.500L12.500 12.500"/></g></svg>
    <svg class="abs" style="left:1544px;top:17px" width="24" height="20" viewBox="0 0 24 20"><g stroke="#2b2b2b" stroke-width="1.400" fill="none"><path d="M1 7H4.500L9.500 2V18L4.500 13H1Z"/><path d="M12.500 6.500C14 8.500 14 11.500 12.500 13.500"/><path d="M15.500 4C18.300 7.500 18.300 12.500 15.500 16"/><path d="M18.700 1.500C22.800 6.500 22.800 13.500 18.700 18.500"/></g></svg>
    <svg class="abs" style="left:1580px;top:19px" width="20" height="19" viewBox="0 0 20 19"><g stroke="#444" stroke-width="1.500" fill="none"><path d="M1.200 17.500A16.300 16.300 0 0 1 17.500 1.200" stroke="#555"/><path d="M5.500 17.500A12 12 0 0 1 17.500 5.500" stroke="#555"/><path d="M9.800 17.500A7.700 7.700 0 0 1 17.500 9.800"/><path d="M13.500 17.500A4 4 0 0 1 17.500 13.500"/></g><circle cx="17" cy="16.500" r="1.800" fill="#222"/></svg>
    <div class="tray" style="left:1611.500px;top:18.500px;font-size:14px">ENG</div>
    <div class="tray" style="left:1648.300px;top:7px;width:90px;text-align:center">8:43 PM</div>
    <div class="tray" style="left:1648.900px;top:30.500px;width:90px;text-align:center;font-size:15.100px">1/22/2022</div>
    <svg class="abs" style="left:1750px;top:16px" width="25" height="23" viewBox="0 0 25 23"><path d="M1.800 1.800H22.800V16.800H15.500L12.300 20.500L9.100 16.800H1.800Z" stroke="#222" stroke-width="1.500" fill="none"/></svg>
    <div class="abs" style="left:1799.500px;top:0;width:1px;height:53.500px;background:#c4c4c4"></div>
  </div>
</div>
</body>
</html>
